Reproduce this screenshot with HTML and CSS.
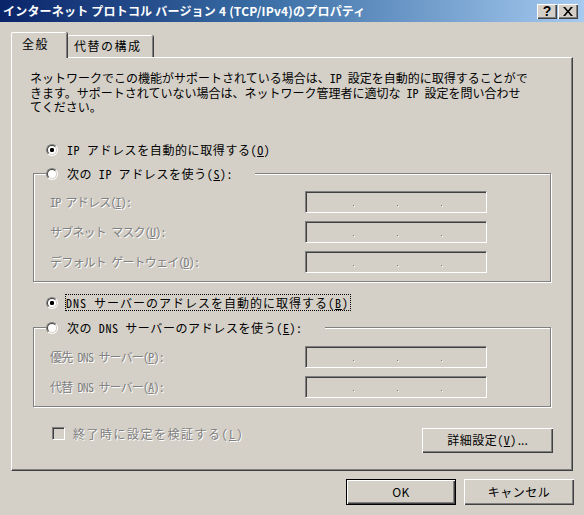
FILE: index.html
```html
<!DOCTYPE html>
<html lang="ja">
<head>
<meta charset="utf-8">
<title>インターネット プロトコル バージョン 4 (TCP/IPv4)のプロパティ</title>
<link rel="stylesheet" href="styles.css">
</head>
<body>
<div class="window">
  <div class="titlebar">
    <span class="title">インターネット プロトコル バージョン 4 (TCP/IPv4)のプロパティ</span>
    <div class="tb-buttons">
      <span class="tb-btn help">?</span>
      <span class="tb-btn close"><svg width="9" height="8" viewBox="0 0 9 8"><path d="M0 0h2l2.5 3 2.5-3h2L5.5 4 9 8H7L4.5 5 2 8H0l3.5-4z" fill="#000"/></svg></span>
    </div>
  </div>
  <div class="content">
    <div class="tabs">
      <div class="tab active">全般</div>
      <div class="tab">代替の構成</div>
    </div>
    <div class="panel">
      <p class="desc"><span>ネットワークでこの機能がサポートされている場合は、IP 設定を自動的に取得することがで</span><span>きます。サポートされていない場合は、ネットワーク管理者に適切な IP 設定を問い合わせ</span><span>てください。</span></p>

      <div class="radio-row first">
        <span class="radio checked"></span><span class="rlabel">IP アドレスを自動的に取得する(<u>O</u>)</span>
      </div>

      <fieldset class="group g1">
        <legend><span class="radio"></span><span class="rlabel">次の IP アドレスを使う(<u>S</u>):</span></legend>
        <div class="field-row"><span class="flabel">IP アドレス(<u>I</u>):</span><span class="ipbox"><i></i><i></i><i></i></span></div>
        <div class="field-row"><span class="flabel">サブネット マスク(<u>U</u>):</span><span class="ipbox"><i></i><i></i><i></i></span></div>
        <div class="field-row"><span class="flabel">デフォルト ゲートウェイ(<u>D</u>):</span><span class="ipbox"><i></i><i></i><i></i></span></div>
      </fieldset>

      <div class="radio-row dns1">
        <span class="radio checked"></span><span class="rlabel focus">DNS サーバーのアドレスを自動的に取得する(<u>B</u>)</span>
      </div>

      <fieldset class="group g2">
        <legend><span class="radio"></span><span class="rlabel">次の DNS サーバーのアドレスを使う(<u>E</u>):</span></legend>
        <div class="field-row"><span class="flabel">優先 DNS サーバー(<u>P</u>):</span><span class="ipbox"><i></i><i></i><i></i></span></div>
        <div class="field-row"><span class="flabel">代替 DNS サーバー(<u>A</u>):</span><span class="ipbox"><i></i><i></i><i></i></span></div>
      </fieldset>

      <div class="bottom-row">
        <div class="check-row"><span class="checkbox"></span><span class="clabel">終了時に設定を検証する(<u>L</u>)</span></div>
        <button class="btn detail">詳細設定(<u>V</u>)<span class="dots">...</span></button>
      </div>
    </div>
    <div class="dialog-buttons">
      <button class="btn default ok">OK</button>
      <button class="btn cancel">キャンセル</button>
    </div>
  </div>
</div>
</body>
</html>
```
FILE: styles.css
```css
* { box-sizing: border-box; }
html, body { margin: 0; padding: 0; }
body {
  width: 584px;
  height: 515px;
  overflow: hidden;
  background: #d4d0c8;
  font-family: "Noto Sans CJK JP", "Noto Sans", sans-serif;
  font-size: 12px;
  line-height: 16px;
  color: #000;
  font-feature-settings: "hwid" 1;
}
.window {
  width: 584px;
  height: 515px;
  display: flex;
  flex-direction: column;
}
.titlebar {
  height: 22px;
  flex: none;
  display: flex;
  align-items: flex-start;
  background: linear-gradient(to right, #0a246a 0%, #3a6ea5 45%, #a6caf0 100%);
  padding-left: 3px;
}
.title {
  color: #fff;
  font-weight: bold;
  font-size: 12px;
  line-height: 22px;
  white-space: nowrap;
  letter-spacing: 0.2px;
  font-feature-settings: normal;
}
.tb-buttons {
  margin-left: auto;
  display: flex;
  gap: 1px;
  margin-top: 4px;
  margin-right: 6px;
}
.tb-btn {
  width: 20px;
  height: 15px;
  background: #d4d0c8;
  box-shadow: inset 1px 1px 0 #fff, inset -1px -1px 0 #404040, inset -2px -2px 0 #808080;
  display: flex;
  align-items: center;
  justify-content: center;
  font-family: "Liberation Sans", sans-serif;
  font-weight: bold;
  font-size: 14px;
  line-height: 15px;
}
.tb-btn svg { width: 10px; height: 9px; }
.content {
  flex: 1;
  padding: 10px 11px 0 11px;
  display: flex;
  flex-direction: column;
}
.tabs {
  display: flex;
  align-items: flex-end;
  height: 26px;
  margin-bottom: -1px;
  position: relative;
  z-index: 1;
}
.tab {
  height: 22px;
  margin-bottom: 1px;
  padding: 2px 6px 0 6px;
  width: 86px;
  border-top: 1px solid #fff;
  border-left: 1px solid #fff;
  border-radius: 2px 2px 0 0;
  box-shadow: inset -1px 0 0 #808080, 1px 0 0 #404040;
  letter-spacing: 1.5px;
  background: #d4d0c8;
}
.tab.active {
  height: 26px;
  width: 56px;
  margin-bottom: 0;
  padding: 3px 0 0 10px;
  position: relative;
  z-index: 2;
}
.panel {
  height: 414px;
  border: 1px solid;
  border-color: #fff #404040 #404040 #fff;
  box-shadow: inset -1px -1px 0 #808080;
  display: flex;
  flex-direction: column;
  align-items: flex-start;
}
.desc {
  margin: 13px 0 0 18px;
  letter-spacing: 0;
  white-space: nowrap;
  display: flex;
  flex-direction: column;
}
.desc span {
  display: block;
  height: 14.5px;
  line-height: 14px;
}
.radio-row {
  display: flex;
  align-items: center;
  height: 16px;
  margin-left: 34px;
}
.radio-row.first { margin-top: 27px; }
.radio-row.dns1 { margin-top: 13px; }
.radio {
  width: 12px;
  height: 12px;
  border-radius: 50%;
  border: 1px solid;
  border-color: #808080 #fff #fff #808080;
  display: flex;
  align-items: center;
  justify-content: center;
  flex: none;
}
.radio::before {
  content: "";
  width: 10px;
  height: 10px;
  border-radius: 50%;
  border: 1px solid;
  border-color: #404040 #d4d0c8 #d4d0c8 #404040;
  background: #fff;
  box-sizing: border-box;
}
.radio.checked::before {
  background: radial-gradient(circle, #000 0 2px, #fff 2.3px);
}
.rlabel {
  margin-left: 9px;
  letter-spacing: 0.6px;
  white-space: nowrap;
}
.rlabel.focus {
  outline: 1px dotted #000;
  outline-offset: 0;
  padding: 0 1px 0 0;
  margin-left: 8px;
  line-height: 15px;
  letter-spacing: 1px;
}
.group {
  margin: 8px 0 0 21px;
  width: 518px;
  border: 1px solid #808080;
  box-shadow: 1px 1px 0 #fff, inset 1px 1px 0 #fff;
  padding: 9px 0 8px 16px;
  display: flex;
  flex-direction: column;
  gap: 8px;
}
.group.g2 { margin-top: 9px; padding-top: 10px; }
.group legend {
  display: flex;
  align-items: center;
  height: 16px;
  padding: 0 22px 0 0;
  margin-left: -4px;
  background: #d4d0c8;
}
.field-row {
  display: flex;
  align-items: center;
  height: 22px;
}
.flabel {
  color: #808080;
  text-shadow: 1px 1px 0 #fff;
  letter-spacing: -0.8px;
  white-space: nowrap;
  width: 255px;
}
.ipbox {
  width: 182px;
  height: 22px;
  background: #d4d0c8;
  border: 1px solid;
  border-color: #808080 #fff #fff #808080;
  box-shadow: inset 1px 1px 0 #404040, inset -1px -1px 0 #d4d0c8;
  display: flex;
  align-items: flex-end;
  padding: 0 0 6px 47px;
  gap: 43px;
}
.ipbox i {
  width: 1px;
  height: 1px;
  background: #808080;
  box-shadow: 1px 1px 0 #fff;
}
.bottom-row {
  margin-top: 21px;
  padding: 0 19px 0 40px;
  width: 100%;
  display: flex;
  justify-content: space-between;
  align-items: flex-start;
}
.check-row {
  display: flex;
  align-items: center;
  height: 16px;
  margin-top: -2px;
}
.checkbox {
  width: 13px;
  height: 13px;
  border: 1px solid;
  border-color: #808080 #fff #fff #808080;
  box-shadow: inset 1px 1px 0 #404040, inset -1px -1px 0 #d4d0c8;
  background: #d4d0c8;
  margin-right: 8px;
  flex: none;
}
.clabel {
  color: #808080;
  text-shadow: 1px 1px 0 #fff;
  letter-spacing: 1.5px;
  white-space: nowrap;
}
.btn {
  font-family: inherit;
  font-size: 12px;
  line-height: 16px;
  letter-spacing: 0.5px;
  color: #000;
  background: #d4d0c8;
  border: none;
  padding: 0;
  margin: 0;
  box-shadow: inset 1px 1px 0 #fff, inset -1px -1px 0 #404040, inset -2px -2px 0 #808080;
  display: flex;
  align-items: center;
  justify-content: center;
  font-feature-settings: "hwid" 1;
}
.btn .dots {
  font-feature-settings: normal;
  letter-spacing: 0;
  margin-left: 1px;
}
.btn.detail { width: 131px; height: 25px; }
.dialog-buttons {
  display: flex;
  justify-content: flex-end;
  gap: 8px;
  margin-top: 8px;
  margin-right: -1px;
}
.btn.ok, .btn.cancel { width: 110px; height: 26px; }
.btn.ok { font-feature-settings: normal; }
.btn.default {
  border: 1px solid #000;
  box-shadow: inset 1px 1px 0 #fff, inset -1px -1px 0 #404040, inset -2px -2px 0 #808080;
}
```
